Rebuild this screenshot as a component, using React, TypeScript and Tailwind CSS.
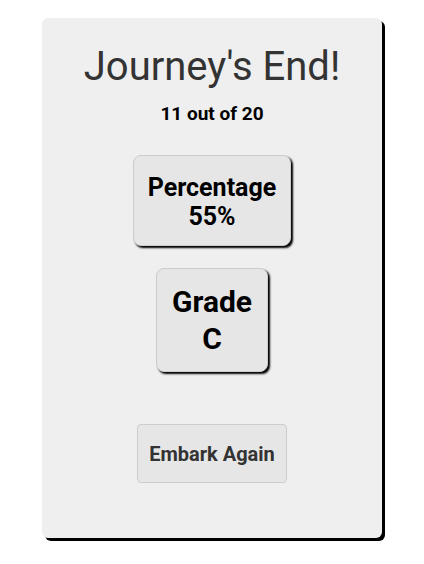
export default function App() {
  const font = { fontFamily: 'Roboto, "Liberation Sans", sans-serif' }

  return (
    <div className="min-h-[564px] bg-white pt-[18px]" style={font}>
      <div className="mx-auto flex w-[80%] flex-col items-center rounded-md bg-[#efefef] pt-[25px] pb-[55px] shadow-[3px_3px_0_#000]">
        <h1 className="text-[40px] font-normal leading-[47px] text-[#333]">
          Journey's End!
        </h1>
        <p className="mt-[13px] text-[19px] font-bold leading-[22px] text-black">
          11 out of 20
        </p>

        <div className="mt-[30px] rounded-lg border border-[#ccc] bg-[#e6e6e6] px-[14px] pt-[17px] pb-[14px] text-center text-[25px] font-bold leading-[29px] text-black shadow-[2px_2px_2px_#000]">
          <div>Percentage</div>
          <div>55%</div>
        </div>

        <div className="mt-[22px] rounded-lg border border-[#ccc] bg-[#e6e6e6] px-[15px] py-[14px] text-center text-[30px] font-bold leading-[37px] text-black shadow-[2px_2px_2px_#000]">
          <div>Grade</div>
          <div>C</div>
        </div>

        <button className="mt-[52px] h-[59px] w-[150px] rounded border border-[#ccc] bg-[#e6e6e6] text-[20px] font-bold text-[#333]">
          Embark Again
        </button>
      </div>
    </div>
  )
}
